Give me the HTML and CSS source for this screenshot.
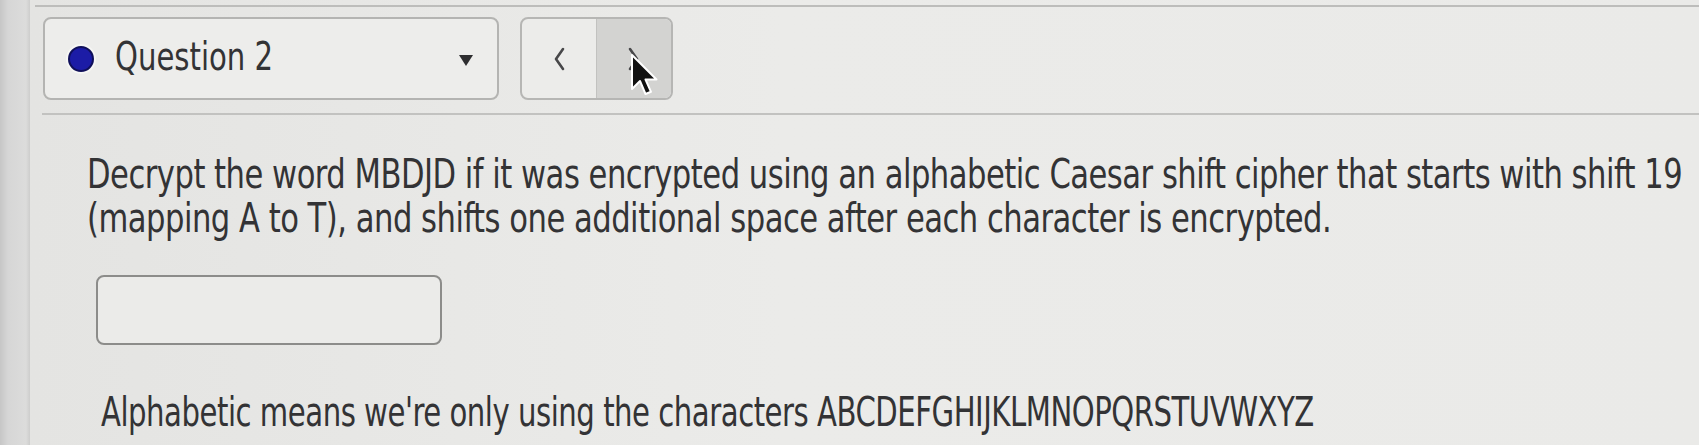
FILE: index.html
```html
<!DOCTYPE html>
<html lang="en">
<head>
<meta charset="utf-8">
<title>Question 2</title>
<link rel="stylesheet" href="styles.css">
</head>
<body>
<div class="frame">
  <div class="side"></div>
  <div class="main">
    <div class="topline"></div>
    <div class="toolbar">
      <div class="dropdown">
        <span class="dot"></span>
        <span class="qtitle"><span class="squeeze">Question 2</span></span>
        <span class="caret"></span>
      </div>
      <div class="nav">
        <div class="navbtn">
          <svg class="chev" viewBox="0 0 12 24" width="12" height="24"><path d="M10 2 L3 12 L10 22" fill="none" stroke="#48484a" stroke-width="2.6" stroke-linecap="round" stroke-linejoin="round"/></svg>
        </div>
        <div class="navbtn hover">
          <svg class="chev" viewBox="0 0 12 24" width="12" height="24"><path d="M2 2 L9 12 L2 22" fill="none" stroke="#48484a" stroke-width="2.6" stroke-linecap="round" stroke-linejoin="round"/></svg>
          <svg class="cursor" viewBox="0 0 30 46" width="30" height="46"><path d="M2 2 L2 36 L10 28 L15.5 41 L21 38.8 L15.5 26.5 L26.5 26.5 Z" fill="#111" stroke="#fff" stroke-width="2" stroke-linejoin="round"/></svg>
        </div>
      </div>
    </div>
    <div class="rule"></div>
    <p class="question">Decrypt the word MBDJD if it was encrypted using an alphabetic Caesar shift cipher that starts with shift 19<br>(mapping A to T), and shifts one additional space after each character is encrypted.</p>
    <div class="answer"></div>
    <p class="note">Alphabetic means we're only using the characters ABCDEFGHIJKLMNOPQRSTUVWXYZ</p>
  </div>
</div>
</body>
</html>
```
FILE: styles.css
```css
html, body {
  margin: 0;
  padding: 0;
}
body {
  width: 1699px;
  height: 445px;
  overflow: hidden;
  background: #e8e8e6;
  font-family: "DejaVu Sans Condensed", "DejaVu Sans", sans-serif;
  color: #333335;
}
.frame {
  display: flex;
  height: 445px;
}
.side {
  width: 30px;
  flex: none;
  background: linear-gradient(90deg, #c6c6c6 0px, #d6d6d6 8px, #dcdcdb 26px, #cdcdcc 30px);
}
.main {
  flex: 1;
  min-width: 0;
  overflow: hidden;
  background: linear-gradient(90deg, #e4e4e2 0%, #ebebe9 45%, #eaeae8 100%);
}
.topline {
  height: 2px;
  margin: 5px 0 0 5px;
  background: #bdbdbb;
}
.toolbar {
  display: flex;
  margin: 10px 0 0 13px;
  gap: 21px;
}
.dropdown {
  box-sizing: border-box;
  width: 456px;
  height: 83px;
  border: 2px solid #b4b4b2;
  border-radius: 8px;
  background: #ededeb;
  display: flex;
  align-items: center;
  padding: 0 24px 0 23px;
}
.dot {
  box-sizing: border-box;
  width: 26px;
  height: 26px;
  border-radius: 50%;
  background: #1c1ca6;
  border: 2px solid #10105a;
  box-shadow: 0 0 0 2px #f6f6f4;
  flex: none;
}
.qtitle {
  margin-left: 21px;
  font-size: 39px;
  flex: 1;
  position: relative;
  top: -2px;
  white-space: nowrap;
}
.squeeze {
  display: inline-block;
  transform: scaleX(0.83);
  transform-origin: left center;
}
.caret {
  width: 0;
  height: 0;
  border-left: 7px solid transparent;
  border-right: 7px solid transparent;
  border-top: 11px solid #2e2e30;
  margin-top: 4px;
}
.nav {
  box-sizing: border-box;
  width: 153px;
  height: 83px;
  border: 2px solid #b6b6b4;
  border-radius: 8px;
  display: flex;
  overflow: hidden;
  background: #ececea;
}
.navbtn {
  flex: 1;
  display: flex;
  align-items: center;
  justify-content: center;
  position: relative;
}
.navbtn + .navbtn {
  border-left: 1px solid #c2c2c0;
}
.navbtn.hover {
  background: #d3d3d1;
}
.chev {
  display: block;
}
.cursor {
  position: absolute;
  left: 33px;
  top: 34px;
}
.rule {
  height: 2px;
  margin: 13px 0 0 12px;
  background: #c2c2c0;
}
.question {
  margin: 37px 0 0 57px;
  font-size: 41px;
  line-height: 44px;
  letter-spacing: -0.6px;
  white-space: nowrap;
  transform: scaleX(0.83);
  transform-origin: left top;
}
.answer {
  box-sizing: border-box;
  width: 346px;
  height: 70px;
  margin: 35px 0 0 66px;
  border: 2px solid #8c8c8a;
  border-radius: 8px;
  background: #ebebe9;
}
.note {
  margin: 45px 0 0 71px;
  font-size: 41px;
  line-height: 44px;
  letter-spacing: -0.6px;
  white-space: nowrap;
  transform: scaleX(0.79);
  transform-origin: left top;
}
```
